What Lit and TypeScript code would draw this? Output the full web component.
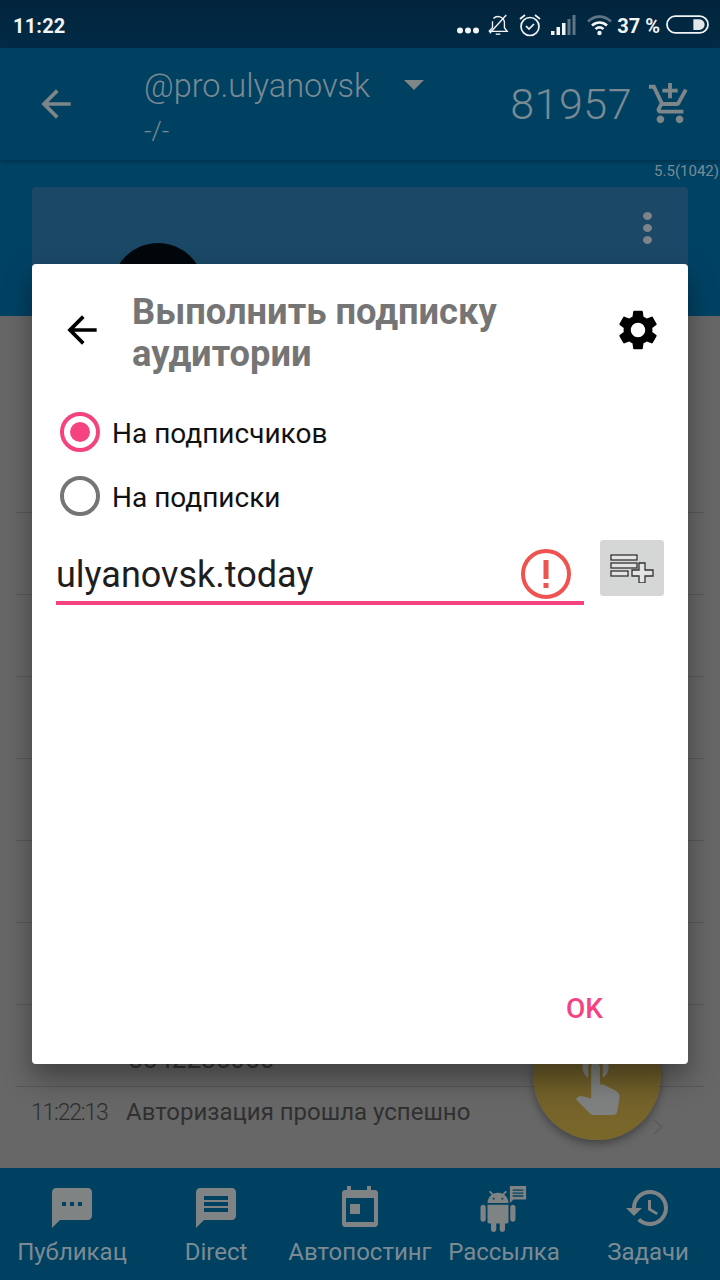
import { LitElement, html, css } from "lit";
import { customElement } from "lit/decorators.js";

const P = {
  back: "M20 11H7.83l5.59-5.59L12 4l-8 8 8 8 1.41-1.41L7.83 13H20v-2z",
  gear: "M19.14 12.94c.04-.3.06-.61.06-.94 0-.32-.02-.64-.07-.94l2.03-1.58c.18-.14.23-.41.12-.61l-1.92-3.32c-.12-.22-.37-.29-.59-.22l-2.39.96c-.5-.38-1.03-.7-1.62-.94l-.36-2.54c-.04-.24-.24-.41-.48-.41h-3.84c-.24 0-.43.17-.47.41l-.36 2.54c-.59.24-1.13.57-1.62.94l-2.39-.96c-.22-.08-.47 0-.59.22L2.74 8.87c-.12.21-.08.47.12.61l2.03 1.58c-.05.3-.09.63-.09.94s.02.64.07.94l-2.03 1.58c-.18.14-.23.41-.12.61l1.92 3.32c.12.22.37.29.59.22l2.39-.96c.5.38 1.03.7 1.62.94l.36 2.54c.05.24.24.41.48.41h3.84c.24 0 .44-.17.47-.41l.36-2.54c.59-.24 1.13-.56 1.62-.94l2.39.96c.22.08.47 0 .59-.22l1.92-3.32c.12-.22.07-.47-.12-.61l-2.01-1.58zM12 15.6c-1.98 0-3.6-1.62-3.6-3.6s1.62-3.6 3.6-3.6 3.6 1.62 3.6 3.6-1.62 3.6-3.6 3.6z",
  cart: "M11 9h2V6h3V4h-3V1h-2v3H8v2h3v3zm-4 9c-1.1 0-1.99.9-1.99 2S5.9 22 7 22s2-.9 2-2-.9-2-2-2zm10 0c-1.1 0-1.99.9-1.99 2s.89 2 1.99 2 2-.9 2-2-.9-2-2-2zm-9.83-3.25l.03-.12.9-1.63h7.45c.75 0 1.41-.41 1.75-1.03l3.86-7.01L19.42 4h-.01l-1.1 2-2.76 5H8.53l-.13-.27L6.16 6l-.95-2-.94-2H1v2h2l3.6 7.59-1.35 2.45c-.16.28-.25.61-.25.96 0 1.1.9 2 2 2h12v-2H7.42c-.13 0-.25-.11-.25-.25z",
  sms: "M20 2H4c-1.1 0-1.99.9-1.99 2L2 22l4-4h14c1.1 0 2-.9 2-2V4c0-1.1-.9-2-2-2zM9 11H7V9h2v2zm4 0h-2V9h2v2zm4 0h-2V9h2v2z",
  msg: "M20 2H4c-1.1 0-1.99.9-1.99 2L2 22l4-4h14c1.1 0 2-.9 2-2V4c0-1.1-.9-2-2-2zm-2 12H6v-2h12v2zm0-3H6V9h12v2zm0-3H6V6h12v2z",
  history: "M13 3c-4.97 0-9 4.03-9 9H1l3.89 3.89.07.14L9 12H6c0-3.87 3.13-7 7-7s7 3.13 7 7-3.13 7-7 7c-1.93 0-3.68-.79-4.94-2.06l-1.42 1.42C8.27 19.99 10.51 21 13 21c4.97 0 9-4.03 9-9s-4.03-9-9-9zm-1 5v5l4.28 2.54.72-1.21-3.5-2.08V8H12z",
  event: "M5.500 1h2v2h8V1h2v2h2c.8 0 1.500.7 1.500 1.500V20c0 .8-.7 1.500-1.500 1.500h-15C3.700 21.500 3 20.800 3 20V4.500C3 3.700 3.700 3 4.500 3h1zM5 7v12h14V7zM7 10v5h5v-5z",
  android: "M6 18c0 .55.45 1 1 1h1v3.5c0 .83.67 1.5 1.5 1.5s1.5-.67 1.5-1.5V19h2v3.5c0 .83.67 1.5 1.5 1.5s1.5-.67 1.5-1.5V19h1c.55 0 1-.45 1-1V8H6v10zM3.5 8C2.67 8 2 8.67 2 9.5v7c0 .83.67 1.5 1.5 1.5S5 17.33 5 16.5v-7C5 8.67 4.33 8 3.5 8zm17 0c-.83 0-1.5.67-1.5 1.5v7c0 .83.67 1.5 1.5 1.5s1.5-.67 1.5-1.5v-7c0-.83-.67-1.5-1.5-1.5zm-4.97-5.84l1.3-1.3c.2-.2.2-.51 0-.71-.2-.2-.51-.2-.71 0l-1.48 1.48C13.85 1.23 12.95 1 12 1c-.96 0-1.86.23-2.66.63L7.85.15c-.2-.2-.51-.2-.71 0-.2.2-.2.51 0 .71l1.31 1.31C6.97 3.26 6 5.01 6 7h12c0-1.99-.97-3.75-2.47-4.84zM10 5H9V4h1v1zm5 0h-1V4h1v1z",
  touch: "M9 11.24V7.5C9 6.12 10.12 5 11.5 5S14 6.12 14 7.5v3.74c1.21-.81 2-2.18 2-3.74C16 5.01 13.99 3 11.5 3S7 5.01 7 7.5c0 1.56.79 2.93 2 3.74zm9.84 4.63l-4.54-2.26c-.17-.07-.35-.11-.54-.11H13v-6c0-.83-.67-1.5-1.5-1.5S10 6.67 10 7.5v10.74l-3.43-.72c-.08-.01-.15-.03-.24-.03-.31 0-.59.13-.79.33l-.79.8 4.94 4.94c.27.27.65.44 1.06.44h6.79c.75 0 1.33-.55 1.44-1.28l.75-4.97c.01-.07.02-.14.02-.2 0-.62-.38-1.16-.91-1.42z",
};

const icon = (d: string, cls: string) => html`<svg class=${cls} viewBox="0 0 24 24"><path d=${d} fill="currentColor" fill-rule="evenodd"></path></svg>`;

const NAV = [
  { label: "Публикац", d: P.sms },
  { label: "Direct", d: P.msg },
  { label: "Автопостинг", d: P.event },
  { label: "Рассылка", d: "" },
  { label: "Задачи", d: P.history },
];

@customElement("app-root")
export class AppRoot extends LitElement {
  static styles = css`
    :host { display: block; width: 720px; height: 1280px; overflow: hidden; position: relative; font-family: Roboto, "Noto Sans", sans-serif; }
    .app { display: flex; flex-direction: column; height: 1280px; background: #676767; }
    .status { height: 48px; flex: none; background: linear-gradient(#02243b, #022b47); color: #f2f4f5; display: flex; align-items: center; padding: 0 11px 0 13px; box-sizing: border-box; }
    .clock { font-size: 20px; font-weight: 700; letter-spacing: 0.2px; margin-top: 3px; }
    .sicons { margin-left: auto; display: flex; align-items: center; margin-top: 1px; }
    .sicons svg { display: block; }
    .s-dots { margin: 12px 8px 0 0; }
    .s-bell { margin-right: 9px; }
    .s-alarm { margin-right: 9px; }
    .s-sig { margin-right: 11px; }
    .s-wifi { margin-right: 5px; }
    .pct { font-size: 20px; font-weight: 700; margin: 2px 6px 0 0; white-space: nowrap; }
    .toolbar { height: 112px; flex: none; background: #004162; color: #7a8a92; display: flex; box-sizing: border-box; position: relative; z-index: 1; box-shadow: 0 2px 4px rgba(0,0,0,.25); }
    .tb-back { width: 44px; height: 44px; margin: 34px 0 0 34px; flex: none; color: #7d8688; }
    .acct { margin-left: 66px; width: 290px; padding-top: 16px; }
    .acct-row { display: flex; align-items: center; font-size: 32.5px; line-height: 44px; font-weight: 300; }
    .tri { width: 0; height: 0; border-left: 10px solid transparent; border-right: 10px solid transparent; border-top: 10px solid #7e8686; margin-left: 34px; margin-top: -3px; }
    .sub { font-size: 26px; line-height: 30px; margin-top: 8px; font-weight: 300; }
    .score { margin-left: auto; font-size: 43px; font-weight: 300; line-height: 112px; letter-spacing: 0.5px; }
    .cart { width: 46px; height: 46px; margin: 33px 27px 0 15px; flex: none; color: #7d8688; }
    .head { height: 156px; flex: none; background: #004264; position: relative; padding: 27px 32px 0; box-sizing: border-box; overflow: hidden; }
    .ver { position: absolute; top: 3px; right: 1px; font-size: 15px; line-height: 17px; color: #7b8b93; }
    .card { height: 129px; background: #1b4866; border-radius: 4px 4px 0 0; position: relative; overflow: hidden; }
    .avatar { position: absolute; left: 80px; top: 56px; width: 92px; height: 92px; background: #02070c; border-radius: 50%; }
    .dots { position: absolute; left: 611px; top: 25px; display: flex; flex-direction: column; gap: 4px; }
    .dots i { width: 9px; height: 8px; border-radius: 50%; background: #7d8387; display: block; }
    .list { flex: 1; padding: 115px 16px 0; background: #676767; overflow: hidden; color: #2c2c2c; }
    .row { height: 82px; box-sizing: border-box; border-bottom: 1px solid #585858; position: relative; }
    .num { position: absolute; left: 112px; top: 39px; font-size: 26px; line-height: 30px; color: #333; }
    .last { height: 80px; position: relative; display: flex; }
    .time { font-size: 23px; width: 79px; margin-left: 15px; line-height: 52px; color: #2e2e2e; white-space: nowrap; letter-spacing: -1.2px; font-weight: 300; flex: none; }
    .msg { font-size: 24px; margin-left: 16px; line-height: 50px; color: #303030; white-space: nowrap; }
    .chev { position: absolute; left: 637px; top: 32px; width: 10px; height: 16px; }
    .nav { height: 112px; flex: none; background: #004162; color: #7c8a92; display: grid; grid-template-columns: repeat(5, 144px); }
    .cell { display: flex; flex-direction: column; align-items: center; font-size: 24px; white-space: nowrap; padding-top: 16px; box-sizing: border-box; }
    .cell .ni { width: 48px; height: 48px; display: block; color: #7f8384; }
    .cell .lbl { margin-top: 4px; line-height: 32px; }
    .andr { position: relative; width: 48px; height: 48px; color: #7f8384; }
    .andr svg { position: absolute; display: block; }
    .a-body { left: -3px; top: 7px; width: 42px; height: 41px; }
    .a-bub { left: 29px; top: 2px; width: 18px; height: 17px; }
    .fab { position: absolute; left: 533px; top: 1012px; width: 128px; height: 128px; border-radius: 50%; background: linear-gradient(#66552a, #7a682a); box-shadow: 0 4px 8px rgba(0,0,0,.35); color: #7f8080; display: flex; align-items: center; justify-content: center; }
    .fab svg { width: 70px; height: 70px; margin-top: 8px; }
    .dialog { position: absolute; left: 32px; top: 264px; width: 656px; height: 800px; background: #fff; border-radius: 4px; box-shadow: 0 14px 28px rgba(0,0,0,.38); box-sizing: border-box; display: flex; flex-direction: column; }
    .d-head { display: flex; padding-top: 27px; height: 136px; box-sizing: border-box; }
    .d-back { width: 44px; height: 44px; margin: 17px 0 0 28px; color: #000; flex: none; }
    .d-title { margin-left: 28px; font-size: 36.3px; line-height: 42px; font-weight: 700; color: #757575; flex: 1; }
    .d-gear { width: 48px; height: 48px; margin: 15px 26px 0 0; color: #000; flex: none; }
    .radio { display: flex; align-items: center; height: 64px; padding-left: 28px; font-size: 28px; color: #111; }
    .rl { margin-top: 2px; }
    .circle { width: 40px; height: 40px; box-sizing: border-box; border: 4px solid #757575; border-radius: 50%; margin-right: 12px; display: flex; align-items: center; justify-content: center; }
    .circle.on { border-color: #f5437f; }
    .circle.on::after { content: ""; width: 20px; height: 20px; border-radius: 50%; background: #f5437f; }
    .input-row { display: flex; padding: 0 24px 0 24px; margin-top: 12px; }
    .field { width: 528px; height: 65px; box-sizing: border-box; border-bottom: 4px solid #f5437f; display: flex; align-items: flex-start; position: relative; font-size: 36px; color: #1e1e1e; line-height: 52px; padding-top: 9px; }
    .err { position: absolute; left: 464px; top: 8px; width: 52px; height: 52px; }
    .addb { width: 64px; height: 56px; background: #d5d6d6; border-radius: 3px; margin-left: 16px; display: flex; align-items: center; justify-content: center; }
    .ok { margin-top: auto; align-self: flex-end; font-size: 28px; font-weight: 500; color: #f5437f; line-height: 32px; margin-right: 85px; margin-bottom: 39px; }
  `;

  private statusIcons() {
    return html`<div class="sicons">
      <svg class="s-dots" width="22" height="7" viewBox="0 0 22 7"><circle cx="3" cy="3.500" r="3" fill="#f2f4f5"/><circle cx="11" cy="3.500" r="3" fill="#f2f4f5"/><circle cx="19" cy="3.500" r="3" fill="#f2f4f5"/></svg>
      <svg class="s-bell" width="22" height="26" viewBox="0 0 24 26" fill="none" stroke="#f2f4f5" stroke-width="1.500"><path d="M2 20h20l-3-4V10a7 7 0 0 0-12-4M6 9v7l-4 4"/><path d="M9.500 23h5"/><path d="M3 22 21 2"/></svg>
      <svg class="s-alarm" width="24" height="26" viewBox="0 0 24 26" fill="none" stroke="#f2f4f5" stroke-width="1.700"><circle cx="12" cy="14.500" r="9"/><path d="M8 14l3 3 5-5"/><path d="M2 7l5-4M22 7l-5-4"/></svg>
      <svg class="s-sig" width="25" height="22" viewBox="0 0 25 22"><rect x="0" y="17" width="3.500" height="4" fill="#f2f4f5"/><rect x="5.500" y="13" width="3.500" height="8" fill="#f2f4f5"/><rect x="11" y="9" width="3.500" height="12" fill="#f2f4f5"/><rect x="16.500" y="5" width="3" height="16" fill="#5f7484"/><rect x="21.500" y="1" width="3" height="20" fill="#5f7484"/></svg>
      <svg class="s-wifi" width="25" height="22" viewBox="0 0 25 22" fill="none" stroke-width="2.600"><path d="M1 7.500C8 1 17 1 24 7.500" stroke="#5f7484"/><path d="M5 11.500c4.500-4 10.500-4 15 0" stroke="#f2f4f5"/><path d="M8.500 15c2.500-2 5.500-2 8 0" stroke="#f2f4f5"/><circle cx="12.500" cy="19" r="2.200" fill="#f2f4f5" stroke="none"/></svg>
      <span class="pct">37 %</span>
      <svg width="43" height="19" viewBox="0 0 44 19"><rect x="1" y="1" width="42" height="17" rx="8.500" fill="none" stroke="#f2f4f5" stroke-width="1.800"/><path d="M28 4h6a5.500 5.500 0 0 1 0 11H28z" fill="#e3e6e8"/></svg>
    </div>`;
  }

  render() {
    return html`
      <div class="app">
        <div class="status"><span class="clock">11:22</span>${this.statusIcons()}</div>
        <div class="toolbar">
          ${icon(P.back, "tb-back")}
          <div class="acct">
            <div class="acct-row"><span>@pro.ulyanovsk</span><span class="tri"></span></div>
            <div class="sub">-/-</div>
          </div>
          <div class="score">81957</div>
          ${icon(P.cart, "cart")}
        </div>
        <div class="head">
          <div class="ver">5.5(1042)</div>
          <div class="card">
            <div class="avatar"></div>
            <div class="dots"><i></i><i></i><i></i></div>
          </div>
        </div>
        <div class="list">
          ${[0, 1, 2, 3, 4, 5, 6].map(() => html`<div class="row"></div>`)}
          <div class="row"><span class="num">5542285056</span></div>
          <div class="last">
            <span class="time">11:22:13</span>
            <span class="msg">Авторизация прошла успешно</span>
            <svg class="chev" viewBox="0 0 10 16" fill="none" stroke="#5c5c5c" stroke-width="1.500"><path d="M1 1l8 7-8 7"/></svg>
          </div>
        </div>
        <div class="nav">
          ${NAV.map((n) => html`<div class="cell">
            ${n.d
              ? icon(n.d, "ni")
              : html`<div class="andr">
                  <svg class="a-body" viewBox="0 0 24 24" preserveAspectRatio="none"><path d=${P.android} fill="currentColor"></path></svg>
                  <svg class="a-bub" viewBox="0 0 20 20" preserveAspectRatio="none"><path fill="currentColor" fill-rule="evenodd" d="M1 0h18v16H5l-4 4zM4 4v1.500h12V4zM4 7.500V9h12V7.500zM4 11v1.500h12V11z"/></svg>
                </div>`}
            <span class="lbl">${n.label}</span>
          </div>`)}
        </div>
      </div>
      <div class="fab">${icon(P.touch, "")}</div>
      <div class="dialog">
        <div class="d-head">
          ${icon(P.back, "d-back")}
          <div class="d-title">Выполнить подписку аудитории</div>
          ${icon(P.gear, "d-gear")}
        </div>
        <div class="radio"><span class="circle on"></span><span class="rl">На подписчиков</span></div>
        <div class="radio"><span class="circle"></span><span class="rl">На подписки</span></div>
        <div class="input-row">
          <div class="field">ulyanovsk.today
            <svg class="err" viewBox="0 0 52 52"><circle cx="26" cy="26" r="23" fill="none" stroke="#ee5350" stroke-width="4"/><rect x="23.500" y="12" width="5" height="19" fill="#ee5350"/><rect x="23.500" y="35" width="5" height="5" fill="#ee5350"/></svg>
          </div>
          <div class="addb">
            <svg width="44" height="30" viewBox="0 0 44 30" fill="#e4e4e4" stroke="#333" stroke-width="1.300"><rect x="1" y="2" width="26" height="5"/><rect x="1" y="10" width="26" height="5"/><rect x="1" y="18" width="17" height="5"/><path d="M29 10h6v7h8v6h-8v7h-6v-7h-7v-6h7z"/></svg>
          </div>
        </div>
        <div class="ok">OK</div>
      </div>
    `;
  }
}
